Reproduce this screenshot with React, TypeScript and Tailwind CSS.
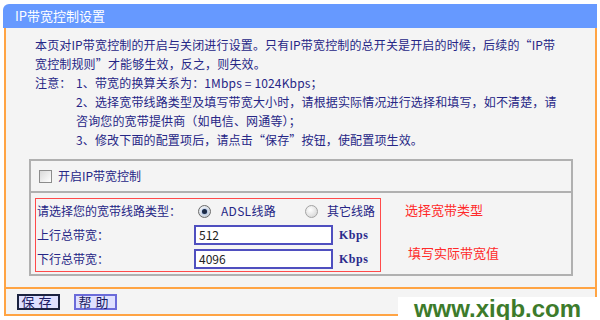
import React from "react";

const cjk = "font-['Noto_Sans_CJK_SC',sans-serif]";

function Radio({ checked = false }: { checked?: boolean }) {
  return (
    <span
      className={
        "inline-flex h-[13px] w-[13px] shrink-0 items-center justify-center rounded-full border " +
        (checked
          ? "border-[#6b6b6b] bg-[radial-gradient(circle_at_40%_35%,#ffffff,#b9c3cf)]"
          : "border-[#a3a3a3] bg-[radial-gradient(circle_at_40%_35%,#ffffff,#cfcfcf)]")
      }
    >
      {checked && <span className="h-[5px] w-[5px] rounded-full bg-[#1d2b44] shadow-[0_0_2px_#3a6fd0]" />}
    </span>
  );
}

function Field({ value }: { value: string }) {
  return (
    <div className="flex items-center">
      <div className="flex h-[20px] w-[139px] items-center border-2 border-[#4f4fbf] bg-white pl-[3px] text-[12px] text-[#222]">
        {value}
      </div>
      <span className="ml-[6px] font-['Liberation_Serif',serif] text-[12px] font-bold tracking-[0.5px] text-[#2b2b8c]">
        Kbps
      </span>
    </div>
  );
}

export default function App() {
  return (
    <div className={"relative h-[320px] w-[600px] overflow-hidden bg-white pl-[3px] pt-[4px] " + cjk}>
      <div className="h-[24px] w-[594px] rounded-tl-[6px] bg-[#6699ff] pl-[12px] text-[13px] leading-[24px] text-white">
        IP带宽控制设置
      </div>

      <div className="ml-[1px] w-[593px] border-x-2 border-b-2 border-[#ffa444] bg-[#f4f4f4]">
        <div className="pl-[29px] pt-[7px] text-[12px] leading-[19px] tracking-[0.15px] text-[#262686]">
          <div>本页对IP带宽控制的开启与关闭进行设置。只有IP带宽控制的总开关是开启的时候，后续的“IP带</div>
          <div>宽控制规则”才能够生效，反之，则失效。</div>
          <div className="flex">
            <span className="w-[41px]">注意：</span>
            <span>1、带宽的换算关系为：1Mbps = 1024Kbps；</span>
          </div>
          <div className="pl-[41px]">2、选择宽带线路类型及填写带宽大小时，请根据实际情况进行选择和填写，如不清楚，请</div>
          <div className="pl-[41px]">咨询您的宽带提供商（如电信、网通等）；</div>
          <div className="pl-[41px]">3、修改下面的配置项后，请点击“保存”按钮，使配置项生效。</div>
        </div>

        <div className="ml-[23px] mt-[10px] w-[544px] border-2 border-[#b0b0b0]">
          <div className="flex h-[32px] items-center border-b-2 border-[#b0b0b0] pl-[8px] text-[12px] text-[#262686]">
            <span className="h-[13px] w-[13px] border border-[#8c8c8c] bg-[linear-gradient(135deg,#d9d9d9,#ffffff)]" />
            <span className="ml-[6px]">开启IP带宽控制</span>
          </div>

          <div className="flex items-start pb-[2px] pl-[4px] pt-[5px]">
            <div className="w-[346px] border border-[#ff4a4a] pl-[1px] text-[12px] text-[#262686]">
              <div className="flex h-[24px] items-center">
                <span className="w-[157px]">请选择您的宽带线路类型：</span>
                <span className="ml-[4px] flex w-[107px] items-center">
                  <Radio checked />
                  <span className="ml-[10px] tracking-[0.3px]">ADSL线路</span>
                </span>
                <span className="flex items-center">
                  <Radio />
                  <span className="ml-[9px]">其它线路</span>
                </span>
              </div>
              <div className="flex h-[24px] items-center">
                <span className="w-[157px]">上行总带宽：</span>
                <Field value="512" />
              </div>
              <div className="flex h-[24px] items-center">
                <span className="w-[157px]">下行总带宽：</span>
                <Field value="4096" />
              </div>
            </div>

            <div className="ml-[24px] flex flex-col text-[13px] text-[#ff2a2a]">
              <div className="flex h-[24px] items-center">选择宽带类型</div>
              <div className="mt-[19px] flex h-[24px] items-center pl-[3px]">填写实际带宽值</div>
            </div>
          </div>
        </div>

        <div className="mt-[11px] flex gap-[14px] border-t-2 border-[#ffa444] pb-[4px] pl-[11px] pt-[5px]">
          <button className="flex h-[16px] w-[43px] items-center justify-center border-2 border-[#1c2340] bg-[#dfe0ff] text-[13px] tracking-[4px] text-[#1a1a60]">
            保存
          </button>
          <button className="flex h-[16px] w-[43px] items-center justify-center border-2 border-[#6b6bd9] bg-[#dfe0ff] text-[13px] tracking-[4px] text-[#1a1a60]">
            帮助
          </button>
        </div>
      </div>

      <div className="absolute bottom-0 right-[3px] flex h-[23px] w-[199px] items-center justify-center bg-white font-['Liberation_Sans',sans-serif] text-[24px] font-bold text-[#3d7b2b]">
        www.xiqb.com
      </div>
    </div>
  );
}
